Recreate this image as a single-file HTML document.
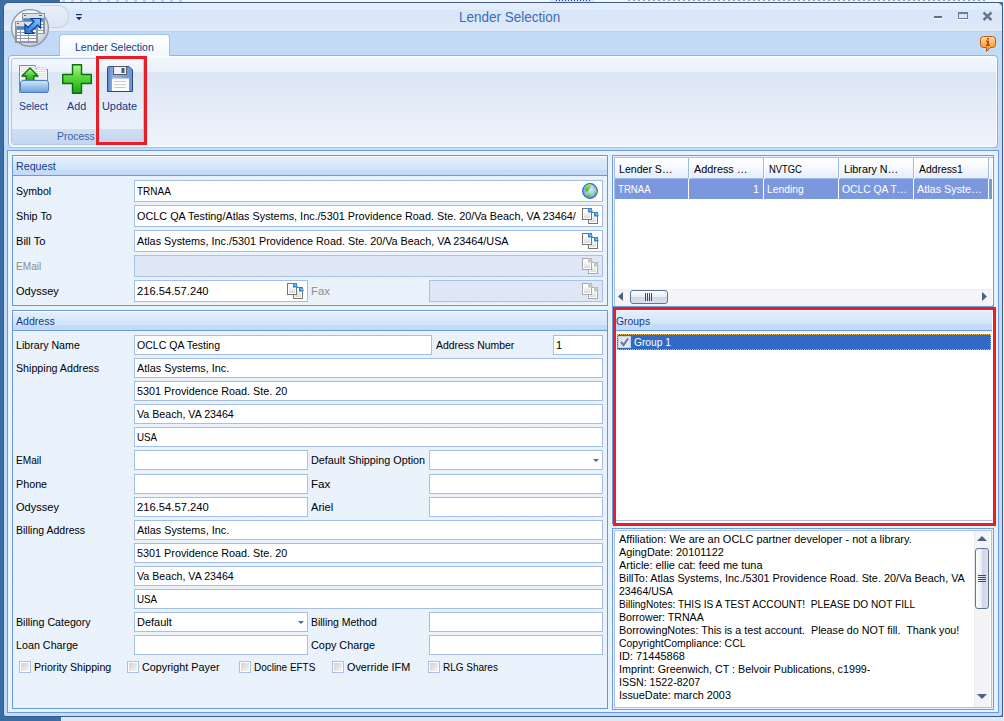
<!DOCTYPE html><html><head><meta charset="utf-8"><title>Lender Selection</title><style>
*{margin:0;padding:0;box-sizing:border-box}
html,body{width:1004px;height:721px;overflow:hidden;background:#3a6ea5;font-family:"Liberation Sans", sans-serif;font-size:11px}
.a{position:absolute}
.t{position:absolute;white-space:nowrap;line-height:13px;font-size:11px;color:#000}
.fld{position:absolute;background:#fff;border:1px solid #a5bee4}
.dis{position:absolute;background:#dfe7f6;border:1px solid #a9c1e6}
.chk{position:absolute;width:12px;height:12px;border:1px solid #a9c2e4;background:#fff}
.chk i{position:absolute;left:1px;top:1px;width:8px;height:8px;background:linear-gradient(135deg,#cfd0d6,#f6f6f8)}
</style></head><body>
<div class="a" style="left:60px;top:0px;width:944px;height:2px;background:#f4f6f9"></div>
<div class="a" style="left:61px;top:717px;width:943px;height:4px;background:#dfe8f5"></div>
<div class="a" style="left:3px;top:2px;width:1000px;height:715px;background:#c5dcf8;border:1px solid #3b5a8a;border-radius:6px 6px 3px 3px"></div>
<div class="a" style="left:4px;top:3px;width:998px;height:29px;background:linear-gradient(#e6eefb,#e3ecfa 22%,#d8e6f9 26%,#dce8f9 70%,#e3edfb);border-radius:5px 5px 0 0"></div>
<div class="a" style="left:4px;top:31px;width:998px;height:1px;background:#b5d3f3"></div>
<div class="a" style="left:4px;top:32px;width:998px;height:23px;background:#c3daf7"></div>
<div class="a" style="left:8px;top:55px;width:990px;height:93px;border:1px solid #8fb2de;border-radius:4px;background:linear-gradient(#f3f7fd,#eaf1fa 17%,#dbe5f3 18%,#e3ebf7 50%,#eef4fc 100%);box-shadow:inset 0 0 0 1px rgba(255,255,255,.6)"></div>
<div class="a" style="left:9px;top:147px;width:988px;height:1px;background:#a4c6dc"></div>
<div class="a" style="left:59px;top:34px;width:111px;height:22px;border:1px solid #a3c2ea;border-bottom:none;border-radius:4px 4px 0 0;background:linear-gradient(#fdfeff,#f3f7fd)"></div>
<div class="t" id="T0" style="left:75px;top:40.7px;color:#0f3b85;transform:scaleX(0.9544);transform-origin:0 0;">Lender Selection</div>
<div class="t" id="T1" style="left:459px;top:11.1px;font-size:14px;color:#3e6cb2;transform:scaleX(0.9640);transform-origin:0 0;">Lender Selection</div>
<div class="a" style="left:7px;top:150px;width:992px;height:563px;border:1px solid #6b9be0;background-color:#eaf2fc;background-image:radial-gradient(rgba(205,218,240,.22) 0.6px, transparent 0.7px);background-size:3px 3px"></div>
<div class="a" style="left:12px;top:155px;width:596px;height:151px;border:1px solid #6598d8"></div>
<div class="a" style="left:13px;top:156px;width:594px;height:20px;border-top:1px solid #fff;border-bottom:1px solid #6a9ad8;background:linear-gradient(#e4eefc,#d2e4fa 70%,#c3dbf8 71%,#c3dbf8)"></div>
<div class="t" id="T2" style="left:16px;top:159.7px;color:#0f3b85;transform:scaleX(0.9711);transform-origin:0 0;">Request</div>
<div class="t" id="T3" style="left:16px;top:184.7px;;transform:scaleX(0.9595);transform-origin:0 0;">Symbol</div>
<div class="a" style="left:134px;top:180px;width:469px;height:22px;background:#fff;border:1px solid #a5bee4"></div>
<div class="t" id="T4" style="left:137px;top:184.7px;;transform:scaleX(0.9066);transform-origin:0 0;">TRNAA</div>
<div class="t" id="T5" style="left:16px;top:209.7px;;transform:scaleX(0.9808);transform-origin:0 0;">Ship To</div>
<div class="a" style="left:134px;top:205px;width:469px;height:22px;background:#fff;border:1px solid #a5bee4"></div>
<div class="t" id="T6" style="left:137px;top:209.7px;;transform:scaleX(0.9858);transform-origin:0 0;">OCLC QA Testing/Atlas Systems, Inc./5301 Providence Road. Ste. 20/Va Beach, VA 23464/</div>
<div class="t" id="T7" style="left:16px;top:234.7px;;transform:scaleX(1.0084);transform-origin:0 0;">Bill To</div>
<div class="a" style="left:134px;top:230px;width:469px;height:22px;background:#fff;border:1px solid #a5bee4"></div>
<div class="t" id="T8" style="left:137px;top:234.7px;;transform:scaleX(0.9828);transform-origin:0 0;">Atlas Systems, Inc./5301 Providence Road. Ste. 20/Va Beach, VA 23464/USA</div>
<div class="t" id="T9" style="left:16px;top:259.7px;color:#8d8d8d;transform:scaleX(0.9195);transform-origin:0 0;">EMail</div>
<div class="a" style="left:134px;top:255px;width:469px;height:22px;background:#dfe7f6;border:1px solid #a9c1e6"></div>
<div class="t" id="T10" style="left:16px;top:284.7px;;transform:scaleX(1.0001);transform-origin:0 0;">Odyssey</div>
<div class="a" style="left:134px;top:280px;width:174px;height:22px;background:#fff;border:1px solid #a5bee4"></div>
<div class="t" id="T11" style="left:137px;top:284.7px;;transform:scaleX(1.0176);transform-origin:0 0;">216.54.57.240</div>
<div class="t" id="T12" style="left:311px;top:284.7px;color:#8d8d8d;transform:scaleX(1.0412);transform-origin:0 0;">Fax</div>
<div class="a" style="left:429px;top:280px;width:174px;height:22px;background:#dfe7f6;border:1px solid #a9c1e6"></div>
<div class="a" style="left:12px;top:310px;width:596px;height:399px;border:1px solid #6598d8"></div>
<div class="a" style="left:13px;top:311px;width:594px;height:20px;border-top:1px solid #fff;border-bottom:1px solid #6a9ad8;background:linear-gradient(#e4eefc,#d2e4fa 70%,#c3dbf8 71%,#c3dbf8)"></div>
<div class="t" id="T13" style="left:16px;top:314.7px;color:#0f3b85;transform:scaleX(0.9614);transform-origin:0 0;">Address</div>
<div class="t" id="T14" style="left:16px;top:338.7px;;transform:scaleX(0.9662);transform-origin:0 0;">Library Name</div>
<div class="a" style="left:134px;top:335px;width:298px;height:20px;background:#fff;border:1px solid #a5bee4"></div>
<div class="t" id="T15" style="left:137px;top:338.7px;;transform:scaleX(0.9593);transform-origin:0 0;">OCLC QA Testing</div>
<div class="t" id="T16" style="left:436px;top:338.7px;;transform:scaleX(0.9486);transform-origin:0 0;">Address Number</div>
<div class="a" style="left:553px;top:335px;width:50px;height:20px;background:#fff;border:1px solid #a5bee4"></div>
<div class="t" id="T17" style="left:556px;top:338.7px;;">1</div>
<div class="t" id="T18" style="left:16px;top:361.7px;;transform:scaleX(0.9693);transform-origin:0 0;">Shipping Address</div>
<div class="a" style="left:134px;top:358px;width:469px;height:20px;background:#fff;border:1px solid #a5bee4"></div>
<div class="t" id="T19" style="left:137px;top:361.7px;;transform:scaleX(0.9868);transform-origin:0 0;">Atlas Systems, Inc.</div>
<div class="a" style="left:134px;top:381px;width:469px;height:20px;background:#fff;border:1px solid #a5bee4"></div>
<div class="t" id="T20" style="left:137px;top:384.7px;;transform:scaleX(0.9831);transform-origin:0 0;">5301 Providence Road. Ste. 20</div>
<div class="a" style="left:134px;top:404px;width:469px;height:20px;background:#fff;border:1px solid #a5bee4"></div>
<div class="t" id="T21" style="left:137px;top:407.7px;;transform:scaleX(0.9689);transform-origin:0 0;">Va Beach, VA 23464</div>
<div class="a" style="left:134px;top:427px;width:469px;height:20px;background:#fff;border:1px solid #a5bee4"></div>
<div class="t" id="T22" style="left:137px;top:430.7px;;transform:scaleX(0.8884);transform-origin:0 0;">USA</div>
<div class="t" id="T23" style="left:16px;top:453.7px;;transform:scaleX(0.9195);transform-origin:0 0;">EMail</div>
<div class="a" style="left:134px;top:450px;width:174px;height:20px;background:#fff;border:1px solid #a5bee4"></div>
<div class="t" id="T24" style="left:311px;top:453.7px;;transform:scaleX(0.9820);transform-origin:0 0;">Default Shipping Option</div>
<div class="a" style="left:429px;top:450px;width:174px;height:20px;background:#fff;border:1px solid #a5bee4"></div>
<div class="t" id="T25" style="left:16px;top:477.7px;;transform:scaleX(0.9776);transform-origin:0 0;">Phone</div>
<div class="a" style="left:134px;top:474px;width:174px;height:20px;background:#fff;border:1px solid #a5bee4"></div>
<div class="t" id="T26" style="left:311px;top:477.7px;;transform:scaleX(1.0576);transform-origin:0 0;">Fax</div>
<div class="a" style="left:429px;top:474px;width:174px;height:20px;background:#fff;border:1px solid #a5bee4"></div>
<div class="t" id="T27" style="left:16px;top:500.7px;;transform:scaleX(1.0047);transform-origin:0 0;">Odyssey</div>
<div class="a" style="left:134px;top:497px;width:174px;height:20px;background:#fff;border:1px solid #a5bee4"></div>
<div class="t" id="T28" style="left:137px;top:500.7px;;transform:scaleX(1.0205);transform-origin:0 0;">216.54.57.240</div>
<div class="t" id="T29" style="left:311px;top:500.7px;;transform:scaleX(1.0084);transform-origin:0 0;">Ariel</div>
<div class="a" style="left:429px;top:497px;width:174px;height:20px;background:#fff;border:1px solid #a5bee4"></div>
<div class="t" id="T30" style="left:16px;top:523.7px;;transform:scaleX(0.9576);transform-origin:0 0;">Billing Address</div>
<div class="a" style="left:134px;top:520px;width:469px;height:20px;background:#fff;border:1px solid #a5bee4"></div>
<div class="t" id="T31" style="left:137px;top:523.7px;;transform:scaleX(0.9868);transform-origin:0 0;">Atlas Systems, Inc.</div>
<div class="a" style="left:134px;top:543px;width:469px;height:20px;background:#fff;border:1px solid #a5bee4"></div>
<div class="t" id="T32" style="left:137px;top:546.7px;;transform:scaleX(0.9831);transform-origin:0 0;">5301 Providence Road. Ste. 20</div>
<div class="a" style="left:134px;top:566px;width:469px;height:20px;background:#fff;border:1px solid #a5bee4"></div>
<div class="t" id="T33" style="left:137px;top:569.7px;;transform:scaleX(0.9689);transform-origin:0 0;">Va Beach, VA 23464</div>
<div class="a" style="left:134px;top:589px;width:469px;height:20px;background:#fff;border:1px solid #a5bee4"></div>
<div class="t" id="T34" style="left:137px;top:592.7px;;transform:scaleX(0.8884);transform-origin:0 0;">USA</div>
<div class="t" id="T35" style="left:16px;top:615.7px;;transform:scaleX(0.9695);transform-origin:0 0;">Billing Category</div>
<div class="a" style="left:134px;top:612px;width:174px;height:20px;background:#fff;border:1px solid #a5bee4"></div>
<div class="t" id="T36" style="left:137px;top:615.7px;;transform:scaleX(0.9983);transform-origin:0 0;">Default</div>
<div class="t" id="T37" style="left:311px;top:615.7px;;transform:scaleX(0.9509);transform-origin:0 0;">Billing Method</div>
<div class="a" style="left:429px;top:612px;width:174px;height:20px;background:#fff;border:1px solid #a5bee4"></div>
<div class="t" id="T38" style="left:16px;top:638.7px;;transform:scaleX(0.9763);transform-origin:0 0;">Loan Charge</div>
<div class="a" style="left:134px;top:635px;width:174px;height:20px;background:#fff;border:1px solid #a5bee4"></div>
<div class="t" id="T39" style="left:311px;top:638.7px;;transform:scaleX(0.9872);transform-origin:0 0;">Copy Charge</div>
<div class="a" style="left:429px;top:635px;width:174px;height:20px;background:#fff;border:1px solid #a5bee4"></div>
<div class="chk" style="left:19px;top:661px"><i></i></div>
<div class="t" id="T40" style="left:34px;top:660.7px;;transform:scaleX(0.9639);transform-origin:0 0;">Priority Shipping</div>
<div class="chk" style="left:127px;top:661px"><i></i></div>
<div class="t" id="T41" style="left:142px;top:660.7px;;transform:scaleX(0.9826);transform-origin:0 0;">Copyright Payer</div>
<div class="chk" style="left:239px;top:661px"><i></i></div>
<div class="t" id="T42" style="left:254px;top:660.7px;;transform:scaleX(0.9033);transform-origin:0 0;">Docline EFTS</div>
<div class="chk" style="left:332px;top:661px"><i></i></div>
<div class="t" id="T43" style="left:347px;top:660.7px;;transform:scaleX(0.9846);transform-origin:0 0;">Override IFM</div>
<div class="chk" style="left:428px;top:661px"><i></i></div>
<div class="t" id="T44" style="left:443px;top:660.7px;;transform:scaleX(0.9070);transform-origin:0 0;">RLG Shares</div>
<div class="a" style="left:612px;top:155px;width:382px;height:152px;border:1px solid #6b9be0;background:#eaf2fc"></div>
<div class="a" style="left:614px;top:157px;width:379px;height:149px;border:1px solid #a9c1e6;border-right:none;background:#fff"></div>
<div class="a" style="left:615px;top:158px;width:74px;height:21px;background:linear-gradient(#ffffff,#f6f9fe 45%,#e4edf9);border-right:1px solid #9ebbe6;border-bottom:1px solid #9ebbe6"></div>
<div class="t" id="T45" style="left:619px;top:162.7px;;transform:scaleX(0.9613);transform-origin:0 0;">Lender S…</div>
<div class="a" style="left:690px;top:158px;width:74px;height:21px;background:linear-gradient(#ffffff,#f6f9fe 45%,#e4edf9);border-right:1px solid #9ebbe6;border-bottom:1px solid #9ebbe6"></div>
<div class="t" id="T46" style="left:694px;top:162.7px;;transform:scaleX(0.9849);transform-origin:0 0;">Address …</div>
<div class="a" style="left:765px;top:158px;width:74px;height:21px;background:linear-gradient(#ffffff,#f6f9fe 45%,#e4edf9);border-right:1px solid #9ebbe6;border-bottom:1px solid #9ebbe6"></div>
<div class="t" id="T47" style="left:769px;top:162.7px;;transform:scaleX(0.8545);transform-origin:0 0;">NVTGC</div>
<div class="a" style="left:840px;top:158px;width:74px;height:21px;background:linear-gradient(#ffffff,#f6f9fe 45%,#e4edf9);border-right:1px solid #9ebbe6;border-bottom:1px solid #9ebbe6"></div>
<div class="t" id="T48" style="left:844px;top:162.7px;;transform:scaleX(0.9762);transform-origin:0 0;">Library N…</div>
<div class="a" style="left:915px;top:158px;width:74px;height:21px;background:linear-gradient(#ffffff,#f6f9fe 45%,#e4edf9);border-right:1px solid #9ebbe6;border-bottom:1px solid #9ebbe6"></div>
<div class="t" id="T49" style="left:919px;top:162.7px;;transform:scaleX(0.9423);transform-origin:0 0;">Address1</div>
<div class="a" style="left:990px;top:158px;width:2px;height:21px;background:linear-gradient(#ffffff,#e4edf9)"></div>
<div class="a" style="left:615px;top:179px;width:377px;height:20px;background:#7b98de"></div>
<div class="a" style="left:688px;top:179px;width:1px;height:20px;background:#fff"></div>
<div class="a" style="left:763px;top:179px;width:1px;height:20px;background:#fff"></div>
<div class="a" style="left:838px;top:179px;width:1px;height:20px;background:#fff"></div>
<div class="a" style="left:913px;top:179px;width:1px;height:20px;background:#fff"></div>
<div class="a" style="left:988px;top:179px;width:1px;height:20px;background:#fff"></div>
<div class="t" id="T50" style="left:618px;top:182.7px;color:#fff;transform:scaleX(0.8744);transform-origin:0 0;">TRNAA</div>
<div class="t" id="T51" style="left:767px;top:182.7px;color:#fff;transform:scaleX(0.9398);transform-origin:0 0;">Lending</div>
<div class="t" id="T52" style="left:842px;top:182.7px;color:#fff;transform:scaleX(0.9369);transform-origin:0 0;">OCLC QA T…</div>
<div class="t" id="T53" style="left:917px;top:182.7px;color:#fff;transform:scaleX(0.9829);transform-origin:0 0;">Atlas Syste…</div>
<div class="t" id="T54" style="left:753px;top:182.7px;color:#fff;">1</div>
<div class="a" style="left:615px;top:289px;width:377px;height:17px;background:linear-gradient(#ecebef,#f6f5f8 2px,#f4f3f6)"></div>
<svg class="a" style="left:618px;top:292px;" width="5" height="9" viewBox="0 0 5 9"><path d="M5 0v9L0 4.5z" fill="#4d6185"/></svg>
<svg class="a" style="left:982px;top:292px;" width="5" height="9" viewBox="0 0 5 9"><path d="M0 0v9l5-4.5z" fill="#4d6185"/></svg>
<div class="a" style="left:630px;top:290px;width:38px;height:14px;border:1px solid #5f7297;border-radius:3px;background:linear-gradient(#fbfcfd,#e9edf3 50%,#cdd6e3 51%,#dbe2ec)"></div>
<div class="a" style="left:645px;top:293px;width:1px;height:8px;background:#3c4a66"></div>
<div class="a" style="left:647px;top:293px;width:1px;height:8px;background:#3c4a66"></div>
<div class="a" style="left:649px;top:293px;width:1px;height:8px;background:#3c4a66"></div>
<div class="a" style="left:651px;top:293px;width:1px;height:8px;background:#3c4a66"></div>
<div class="a" style="left:612px;top:307px;width:382px;height:217px;border:1px solid #6b9be0;background:#fff"></div>
<div class="a" style="left:616px;top:310px;width:376px;height:21px;border-top:1px solid #fff;border-bottom:1px solid #6a9ad8;background:linear-gradient(#e4eefc,#d2e4fa 70%,#c3dbf8 71%,#c3dbf8)"></div>
<div class="t" id="T55" style="left:616px;top:314.7px;color:#0f3b85;transform:scaleX(0.9452);transform-origin:0 0;">Groups</div>
<div class="a" style="left:616px;top:331px;width:376px;height:190px;background:#fff;border-bottom:1px solid #a9c1e6"></div>
<div class="a" style="left:616px;top:331px;width:376px;height:2px;background:#eef5fe"></div>
<div class="a" style="left:617px;top:334px;width:374px;height:16px;background:#316ac5;border:1px dotted #e8b048"></div>
<div class="chk" style="left:618px;top:336px;width:13px;height:12px;border-color:#c5cfe0;background:#e4e6ea"></div>
<svg class="a" style="left:619px;top:337px;" width="11" height="10" viewBox="0 0 11 10"><path d="M2 5 L4.5 8 L9 1.5" stroke="#5f7aa8" stroke-width="2" fill="none"/></svg>
<div class="t" id="T56" style="left:634px;top:335.7px;color:#fff;transform:scaleX(0.9283);transform-origin:0 0;">Group 1</div>
<div class="a" style="left:613px;top:307px;width:383px;height:219px;border:3px solid #ec1c24"></div>
<div class="a" style="left:612px;top:528px;width:382px;height:182px;border:1px solid #6b9be0;background:#eaf2fc"></div>
<div class="a" style="left:614px;top:530px;width:378px;height:178px;border:1px solid #a9c1e6;background:#fff"></div>
<div class="t" id="T57" style="left:619px;top:532.7px;;transform:scaleX(0.9973);transform-origin:0 0;">Affiliation: We are an OCLC partner developer - not a library.</div>
<div class="t" id="T58" style="left:619px;top:545.7px;;transform:scaleX(0.9923);transform-origin:0 0;">AgingDate: 20101122</div>
<div class="t" id="T59" style="left:619px;top:558.7px;;transform:scaleX(0.9945);transform-origin:0 0;">Article: ellie cat: feed me tuna</div>
<div class="t" id="T60" style="left:619px;top:571.7px;;transform:scaleX(0.9847);transform-origin:0 0;">BillTo: Atlas Systems, Inc./5301 Providence Road. Ste. 20/Va Beach, VA</div>
<div class="t" id="T61" style="left:619px;top:584.7px;;transform:scaleX(0.9562);transform-origin:0 0;">23464/USA</div>
<div class="t" id="T62" style="left:619px;top:597.7px;;transform:scaleX(0.9200);transform-origin:0 0;">BillingNotes: THIS IS A TEST ACCOUNT!&nbsp; PLEASE DO NOT FILL</div>
<div class="t" id="T63" style="left:619px;top:610.7px;;transform:scaleX(0.9655);transform-origin:0 0;">Borrower: TRNAA</div>
<div class="t" id="T64" style="left:619px;top:623.7px;;transform:scaleX(0.9765);transform-origin:0 0;">BorrowingNotes: This is a test account.&nbsp; Please do NOT fill.&nbsp; Thank you!</div>
<div class="t" id="T65" style="left:619px;top:636.7px;;transform:scaleX(0.9491);transform-origin:0 0;">CopyrightCompliance: CCL</div>
<div class="t" id="T66" style="left:619px;top:649.7px;;transform:scaleX(0.9975);transform-origin:0 0;">ID: 71445868</div>
<div class="t" id="T67" style="left:619px;top:662.7px;;transform:scaleX(0.9752);transform-origin:0 0;">Imprint: Greenwich, CT : Belvoir Publications, c1999-</div>
<div class="t" id="T68" style="left:619px;top:675.7px;;transform:scaleX(0.9622);transform-origin:0 0;">ISSN: 1522-8207</div>
<div class="t" id="T69" style="left:619px;top:688.7px;;transform:scaleX(0.9839);transform-origin:0 0;">IssueDate: march 2003</div>
<div class="a" style="left:974px;top:531px;width:16px;height:176px;background:#f4f3f6;border-left:1px solid #ecebef"></div>
<svg class="a" style="left:977px;top:536px;" width="10" height="5" viewBox="0 0 10 5"><path d="M0 5h10L5 0z" fill="#4d6185"/></svg>
<svg class="a" style="left:977px;top:694px;" width="10" height="5" viewBox="0 0 10 5"><path d="M0 0h10L5 5z" fill="#4d6185"/></svg>
<div class="a" style="left:975px;top:548px;width:14px;height:61px;border:1px solid #5f7297;border-radius:3px;background:linear-gradient(90deg,#fbfcfd,#e9edf3 50%,#cdd6e3 51%,#dbe2ec)"></div>
<div class="a" style="left:978px;top:575px;width:8px;height:1px;background:#3c4a66"></div>
<div class="a" style="left:978px;top:577px;width:8px;height:1px;background:#3c4a66"></div>
<div class="a" style="left:978px;top:579px;width:8px;height:1px;background:#3c4a66"></div>
<div class="a" style="left:978px;top:581px;width:8px;height:1px;background:#3c4a66"></div>
<svg class="a" style="left:582px;top:183px;" width="16" height="16" viewBox="0 0 16 16"><defs><radialGradient id="gl" cx="0.55" cy="0.4" r="0.65"><stop offset="0" stop-color="#dbeaff"/><stop offset="0.6" stop-color="#92bdf5"/><stop offset="1" stop-color="#3f7fe0"/></radialGradient><linearGradient id="gr" x1="0" y1="0" x2="0" y2="1"><stop offset="0" stop-color="#a6ec5c"/><stop offset="1" stop-color="#3fae22"/></linearGradient></defs><circle cx="8" cy="8" r="7.4" fill="url(#gl)" stroke="#2c62cc" stroke-width="1.1"/><path d="M2.3 4.5 C3.5 2.2 6.5 1 9.3 1.4 C9 3.2 8.6 4.6 7.4 6 C6.4 7 6 8.6 4.8 8.8 C3.6 8.4 2.6 6.8 2.3 4.5Z" fill="url(#gr)"/><path d="M4 10 C5.4 9.2 7.4 9.3 8.6 10.6 C8.6 12.4 7.8 14.2 6.4 15.3 C5 14.2 4.2 12.2 4 10Z" fill="url(#gr)"/><path d="M12.6 7.2 C13.6 6.8 14.6 7.2 14.8 8.4 C14.6 10.4 13.8 12 12.6 12.8 C12.2 11 12 8.8 12.6 7.2Z" fill="url(#gr)"/><path d="M11.2 3.2 C12.2 3.4 13 4.2 12.8 5.4 C12 5.6 11.2 4.6 11.2 3.2Z" fill="#6fd03a"/></svg>
<svg class="a" style="left:582px;top:208px;" width="17" height="16" viewBox="0 0 17 16"><defs><linearGradient id="pg582_208" x1="0" y1="0" x2="0" y2="1"><stop offset="0" stop-color="#ffffff"/><stop offset="1" stop-color="#d9d9db"/></linearGradient></defs><rect x="6.5" y="4.5" width="9" height="11" fill="#fff" stroke="#747474"/><rect x="8" y="7" width="6" height="7" fill="url(#pg582_208)"/><path d="M12 4 H14 Q16.5 4.5 16.5 7 V8.5 H12 Z" fill="#2a88e0"/><path d="M13.3 5.6 Q14.8 5.6 15 7" stroke="#d8ecff" stroke-width="0.9" fill="none"/><rect x="0.5" y="0.5" width="9" height="11" fill="#fff" stroke="#747474"/><rect x="2" y="3" width="6" height="7" fill="url(#pg582_208)"/><path d="M6 0 H8 Q10.5 0.5 10.5 3 V4.5 H6 Z" fill="#2a88e0"/><path d="M7.3 1.6 Q8.8 1.6 9 3" stroke="#d8ecff" stroke-width="0.9" fill="none"/></svg>
<svg class="a" style="left:582px;top:233px;" width="17" height="16" viewBox="0 0 17 16"><defs><linearGradient id="pg582_233" x1="0" y1="0" x2="0" y2="1"><stop offset="0" stop-color="#ffffff"/><stop offset="1" stop-color="#d9d9db"/></linearGradient></defs><rect x="6.5" y="4.5" width="9" height="11" fill="#fff" stroke="#747474"/><rect x="8" y="7" width="6" height="7" fill="url(#pg582_233)"/><path d="M12 4 H14 Q16.5 4.5 16.5 7 V8.5 H12 Z" fill="#2a88e0"/><path d="M13.3 5.6 Q14.8 5.6 15 7" stroke="#d8ecff" stroke-width="0.9" fill="none"/><rect x="0.5" y="0.5" width="9" height="11" fill="#fff" stroke="#747474"/><rect x="2" y="3" width="6" height="7" fill="url(#pg582_233)"/><path d="M6 0 H8 Q10.5 0.5 10.5 3 V4.5 H6 Z" fill="#2a88e0"/><path d="M7.3 1.6 Q8.8 1.6 9 3" stroke="#d8ecff" stroke-width="0.9" fill="none"/></svg>
<svg class="a" style="left:582px;top:258px;" width="17" height="16" viewBox="0 0 17 16"><defs><linearGradient id="pg582_258" x1="0" y1="0" x2="0" y2="1"><stop offset="0" stop-color="#ffffff"/><stop offset="1" stop-color="#d9d9db"/></linearGradient></defs><rect x="6.5" y="4.5" width="9" height="11" fill="#fff" stroke="#a9a9a9"/><rect x="8" y="7" width="6" height="7" fill="url(#pg582_258)"/><path d="M12 4 H14 Q16.5 4.5 16.5 7 V8.5 H12 Z" fill="#c4c4c4"/><rect x="0.5" y="0.5" width="9" height="11" fill="#fff" stroke="#a9a9a9"/><rect x="2" y="3" width="6" height="7" fill="url(#pg582_258)"/><path d="M6 0 H8 Q10.5 0.5 10.5 3 V4.5 H6 Z" fill="#c4c4c4"/></svg>
<svg class="a" style="left:287px;top:283px;" width="17" height="16" viewBox="0 0 17 16"><defs><linearGradient id="pg287_283" x1="0" y1="0" x2="0" y2="1"><stop offset="0" stop-color="#ffffff"/><stop offset="1" stop-color="#d9d9db"/></linearGradient></defs><rect x="6.5" y="4.5" width="9" height="11" fill="#fff" stroke="#747474"/><rect x="8" y="7" width="6" height="7" fill="url(#pg287_283)"/><path d="M12 4 H14 Q16.5 4.5 16.5 7 V8.5 H12 Z" fill="#2a88e0"/><path d="M13.3 5.6 Q14.8 5.6 15 7" stroke="#d8ecff" stroke-width="0.9" fill="none"/><rect x="0.5" y="0.5" width="9" height="11" fill="#fff" stroke="#747474"/><rect x="2" y="3" width="6" height="7" fill="url(#pg287_283)"/><path d="M6 0 H8 Q10.5 0.5 10.5 3 V4.5 H6 Z" fill="#2a88e0"/><path d="M7.3 1.6 Q8.8 1.6 9 3" stroke="#d8ecff" stroke-width="0.9" fill="none"/></svg>
<svg class="a" style="left:582px;top:283px;" width="17" height="16" viewBox="0 0 17 16"><defs><linearGradient id="pg582_283" x1="0" y1="0" x2="0" y2="1"><stop offset="0" stop-color="#ffffff"/><stop offset="1" stop-color="#d9d9db"/></linearGradient></defs><rect x="6.5" y="4.5" width="9" height="11" fill="#fff" stroke="#a9a9a9"/><rect x="8" y="7" width="6" height="7" fill="url(#pg582_283)"/><path d="M12 4 H14 Q16.5 4.5 16.5 7 V8.5 H12 Z" fill="#c4c4c4"/><rect x="0.5" y="0.5" width="9" height="11" fill="#fff" stroke="#a9a9a9"/><rect x="2" y="3" width="6" height="7" fill="url(#pg582_283)"/><path d="M6 0 H8 Q10.5 0.5 10.5 3 V4.5 H6 Z" fill="#c4c4c4"/></svg>
<svg class="a" style="left:593px;top:459px;" width="6" height="4" viewBox="0 0 6 4"><path d="M0 0h6l-3 3z" fill="#3d6cb5"/></svg>
<svg class="a" style="left:298px;top:621px;" width="6" height="4" viewBox="0 0 6 4"><path d="M0 0h6l-3 3z" fill="#3d6cb5"/></svg>
<div class="a" style="left:40px;top:5px;width:29px;height:23px;border:1px solid #c6d3e6;border-left:none;border-radius:0 11px 11px 0;background:linear-gradient(#e9eff8,#dce5f2)"></div>
<svg class="a" style="left:76px;top:14px;" width="6" height="7" viewBox="0 0 6 7"><rect x="0" y="0" width="6" height="1.2" fill="#15316a"/><path d="M0 3h6l-3 3.2z" fill="#15316a"/></svg>
<svg class="a" style="left:11px;top:9px;" width="38" height="38" viewBox="0 0 38 38"><defs><radialGradient id="orb" cx="0.42" cy="0.32" r="0.72"><stop offset="0" stop-color="#ffffff"/><stop offset="0.55" stop-color="#eef1f5"/><stop offset="0.86" stop-color="#cdd4de"/><stop offset="1" stop-color="#a7b1bf"/></radialGradient><linearGradient id="arw" x1="0" y1="1" x2="1" y2="0"><stop offset="0" stop-color="#1b6fd8"/><stop offset="1" stop-color="#8fccfb"/></linearGradient></defs><circle cx="19" cy="19" r="18.4" fill="url(#orb)" stroke="#8e99aa" stroke-width="1.3"/><rect x="11.5" y="4.5" width="22" height="20" fill="#d9e0ea" stroke="#8b95a4"/><rect x="13" y="6" width="2" height="1" fill="#5a6472"/><rect x="28" y="6" width="3" height="1" fill="#5a6472"/><rect x="12" y="9" width="21" height="15" fill="#8f99a8"/><rect x="13" y="10" width="19" height="2" fill="#3a8ad8"/><rect x="13" y="13" width="3" height="2" fill="#fbfbfc"/><rect x="17" y="13" width="7" height="2" fill="#fbfbfc"/><rect x="25" y="13" width="7" height="2" fill="#fbfbfc"/><rect x="13" y="16" width="3" height="2" fill="#fbfbfc"/><rect x="17" y="16" width="7" height="2" fill="#fbfbfc"/><rect x="25" y="16" width="7" height="2" fill="#fbfbfc"/><rect x="13" y="19" width="3" height="2" fill="#fbfbfc"/><rect x="17" y="19" width="7" height="2" fill="#fbfbfc"/><rect x="25" y="19" width="7" height="2" fill="#fbfbfc"/><rect x="13" y="22" width="3" height="2" fill="#fbfbfc"/><rect x="17" y="22" width="7" height="2" fill="#fbfbfc"/><rect x="25" y="22" width="7" height="2" fill="#fbfbfc"/><rect x="4.5" y="12.5" width="22" height="21" fill="#d9e0ea" stroke="#8b95a4"/><rect x="6" y="14" width="2" height="1" fill="#5a6472"/><rect x="21" y="14" width="3" height="1" fill="#5a6472"/><rect x="5" y="17" width="21" height="16" fill="#8f99a8"/><rect x="6" y="18" width="19" height="2" fill="#3a8ad8"/><rect x="6" y="21" width="3" height="2" fill="#fbfbfc"/><rect x="10" y="21" width="7" height="2" fill="#fbfbfc"/><rect x="18" y="21" width="7" height="2" fill="#fbfbfc"/><rect x="6" y="24" width="3" height="2" fill="#fbfbfc"/><rect x="10" y="24" width="7" height="2" fill="#fbfbfc"/><rect x="18" y="24" width="7" height="2" fill="#fbfbfc"/><rect x="6" y="27" width="3" height="2" fill="#fbfbfc"/><rect x="10" y="27" width="7" height="2" fill="#fbfbfc"/><rect x="18" y="27" width="7" height="2" fill="#fbfbfc"/><rect x="6" y="30" width="3" height="2" fill="#fbfbfc"/><rect x="10" y="30" width="7" height="2" fill="#fbfbfc"/><rect x="18" y="30" width="7" height="2" fill="#fbfbfc"/><path d="M14 24.5 L14 15.5 L17 18.5 L23 12.5 L20 9.5 L29.5 9.5 L29.5 19 L26.5 16 L20.5 22 L23 24.5 Z" fill="url(#arw)" stroke="#0a3d98" stroke-width="1.2" stroke-linejoin="miter"/></svg>
<div class="a" style="left:934px;top:16px;width:8px;height:2px;background:#5c6f8c;box-shadow:0 1px 0 #fff"></div>
<div class="a" style="left:958px;top:12px;width:10px;height:7px;border:1px solid #6b7d98;border-top-width:2px;box-shadow:0 1px 0 #fff"></div>
<svg class="a" style="left:982px;top:11px;" width="11" height="11" viewBox="0 0 11 11"><path d="M1.5 1.5 L9.5 9 M9.5 1.5 L1.5 9" stroke="#66768f" stroke-width="2.4"/></svg>
<svg class="a" style="left:980px;top:36px;" width="16" height="16" viewBox="0 0 16 16"><defs><linearGradient id="inf" x1="0" y1="0" x2="0" y2="1"><stop offset="0" stop-color="#ffe3a6"/><stop offset="0.5" stop-color="#fdb14e"/><stop offset="1" stop-color="#f28a1c"/></linearGradient></defs><path d="M3.5 0.5 H12.5 Q15.5 0.5 15.5 3.5 V8.5 Q15.5 11.5 12.5 11.5 H10.5 L6.5 15.5 V11.5 H3.5 Q0.5 11.5 0.5 8.5 V3.5 Q0.5 0.5 3.5 0.5Z" fill="url(#inf)" stroke="#c0521c"/><rect x="7" y="2" width="2" height="1.6" fill="#c8401c"/><path d="M6 4.6h3v4h1v1.4h-4v-1.4h1v-2.6h-1z" fill="#c8401c"/></svg>
<div class="a" style="left:11px;top:58px;width:133px;height:87px;border:1px solid #b3c9e6;border-radius:3px;background:linear-gradient(#f4f8fd,#ebf1fa 15%,#dce6f4 16%,#e5edf8 60%,#eef4fc)"></div>
<div class="a" style="left:12px;top:129px;width:131px;height:15px;background:linear-gradient(#cfdef3,#c3d6f0);border-radius:0 0 2px 2px"></div>
<div class="t" id="T70" style="left:57px;top:129.7px;color:#3f62a2;transform:scaleX(0.9509);transform-origin:0 0;">Process</div>
<div class="t" id="T71" style="left:19px;top:99.7px;color:#0f3b85;transform:scaleX(0.9418);transform-origin:0 0;">Select</div>
<div class="t" id="T72" style="left:67px;top:99.7px;color:#0f3b85;transform:scaleX(0.9756);transform-origin:0 0;">Add</div>
<div class="t" id="T73" style="left:102px;top:99.7px;color:#0f3b85;transform:scaleX(0.9892);transform-origin:0 0;">Update</div>
<svg class="a" style="left:18px;top:64px;" width="32" height="30" viewBox="0 0 32 30"><defs><linearGradient id="fld" x1="0" y1="0" x2="0" y2="1"><stop offset="0" stop-color="#d3e6f9"/><stop offset="1" stop-color="#6aa0de"/></linearGradient><linearGradient id="grn" x1="0" y1="0" x2="0" y2="1"><stop offset="0" stop-color="#c6fb9f"/><stop offset="0.5" stop-color="#52d23a"/><stop offset="1" stop-color="#149e14"/></linearGradient></defs><path d="M1.5 1.5 H17 L18.5 5.5 H29.5 V28.5 H1.5Z" fill="#fbfbfb" stroke="#858585"/><path d="M3 3.5h25" stroke="#dedede"/><path d="M3 5.5h25" stroke="#dedede"/><path d="M3 7.5h25" stroke="#dedede"/><path d="M3 9.5h25" stroke="#dedede"/><path d="M3 11.5h25" stroke="#dedede"/><path d="M3 13.5h25" stroke="#dedede"/><path d="M3 15.5h25" stroke="#dedede"/><path d="M3 17.5h25" stroke="#dedede"/><path d="M3 19.5h25" stroke="#dedede"/><path d="M3 21.5h25" stroke="#dedede"/><path d="M3 23.5h25" stroke="#dedede"/><path d="M3 25.5h25" stroke="#dedede"/><path d="M12 4 L20 12 H15.8 V17.5 H8.2 V12 H4Z" fill="url(#grn)" stroke="#0b6b0b" stroke-width="1.3" stroke-linejoin="round"/><rect x="2.5" y="16.5" width="28" height="12" rx="2.5" fill="url(#fld)" stroke="#4d7ec6"/></svg>
<svg class="a" style="left:62px;top:64px;" width="30" height="30" viewBox="0 0 30 30"><defs><linearGradient id="grn2" x1="0" y1="0" x2="0" y2="1"><stop offset="0" stop-color="#a8f88a"/><stop offset="0.45" stop-color="#5ad740"/><stop offset="1" stop-color="#1ca518"/></linearGradient></defs><path d="M10.5 0.7 H19.5 V10.5 H29.3 V19.5 H19.5 V29.3 H10.5 V19.5 H0.7 V10.5 H10.5Z" fill="url(#grn2)" stroke="#0a6e0a" stroke-width="1.4" stroke-linejoin="round"/></svg>
<svg class="a" style="left:107px;top:66px;" width="26" height="26" viewBox="0 0 26 26"><defs><linearGradient id="fl" x1="0" y1="0" x2="1" y2="0"><stop offset="0" stop-color="#5a82ca"/><stop offset="0.25" stop-color="#95b4e8"/><stop offset="1" stop-color="#6c92d3"/></linearGradient></defs><path d="M1.5 0.5 H22 L25.5 4 V25.5 H0.5 V1.5Z" fill="url(#fl)" stroke="#2b4a86"/><rect x="6.5" y="0.5" width="13" height="8" fill="#f2f2f2" stroke="#5a5a5a"/><rect x="14.5" y="2" width="3" height="5" fill="#3a5c96"/><rect x="5" y="12.5" width="17" height="12.5" fill="#fbfbfb"/><path d="M7 15.5h12M7 18.5h12M7 21.5h12" stroke="#cccccc"/></svg>
<div class="a" style="left:96px;top:56px;width:51px;height:89px;border:3px solid #ec1c24"></div>
<div class="a" style="left:62px;top:0px;width:120px;height:2px;background:repeating-linear-gradient(90deg,#c9d3df 0 3px,#f4f6f9 3px 9px)"></div>
<div class="a" style="left:550px;top:0px;width:44px;height:2px;background:#d6e3f4"></div>
<div class="a" style="left:556px;top:0px;width:34px;height:1px;background:repeating-linear-gradient(90deg,#27408a 0 1px,#d6e3f4 1px 3px)"></div>
<div class="a" style="left:628px;top:0px;width:360px;height:1px;background:repeating-linear-gradient(90deg,#9a9a9a 0 2px,#f4f6f9 2px 5px)"></div>
<div class="a" style="left:1003px;top:0px;width:1px;height:721px;background:#eef2f8"></div>
</body></html>
